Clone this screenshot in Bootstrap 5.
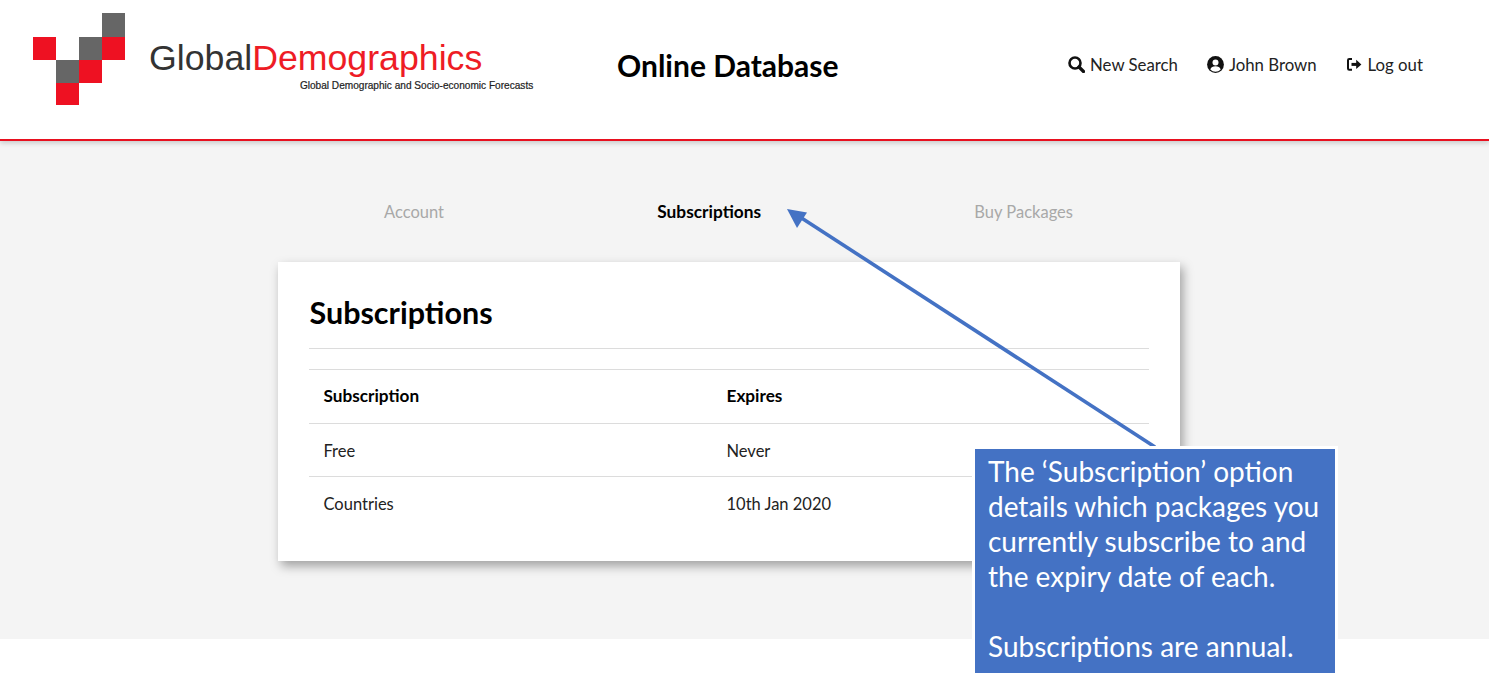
<!DOCTYPE html>
<html lang="en">
<head>
<meta charset="utf-8">
<title>Online Database</title>
<link href="https://cdn.jsdelivr.net/npm/bootstrap@5.3.0/dist/css/bootstrap.min.css" rel="stylesheet">
<style>
html,body{height:100%;}
body{background:#fff;font-family:"Lato","Liberation Sans",sans-serif;color:#111;position:relative;overflow:hidden;}
.top-bar{height:141px;border-bottom:2px solid #e8101f;box-shadow:0 2px 5px rgba(0,0,0,.18);padding:13px 66px 0 33px;background:#fff;position:relative;}
.brand-wrap{width:584px;height:92px;gap:24px;flex:none;}
.logo-mark{width:92px;height:92px;flex:none;}
.brand-name{font-family:"Liberation Sans",Arial,sans-serif;font-size:35.7px;line-height:38px;color:#333;margin-top:26px;white-space:nowrap;}
.brand-name span{color:#ee1c25;}
.brand-tag{font-family:"Liberation Sans",Arial,sans-serif;font-size:10.1px;line-height:11px;color:#222;text-align:right;white-space:nowrap;margin-right:-51px;margin-top:3px;-webkit-text-stroke:.2px #222;}
.site-title{font-size:30px;font-weight:700;color:#000;margin:34px auto 0 0;line-height:36px;white-space:nowrap;}
.top-links{gap:29px;margin-top:39px;}
.top-links a{color:#222;font-size:16.8px;line-height:25px;text-decoration:none;display:flex;align-items:center;gap:5px;}
.main-band{background:#f4f4f4;height:498px;padding:57px 32px 0 0;}
.tab-row{width:689px;margin:0 auto;height:28px;}
.tab-row a{font-size:16.5px;color:#a8a8a8;text-decoration:none;line-height:28px;padding:0;}
.tab-row a.active{color:#000;font-weight:700;font-size:17.3px;}
.sub-panel{width:902px;height:299px;margin:36px auto 0;background:#fff;box-shadow:3px 5px 10px rgba(0,0,0,.35);padding:31px 31px 0;border-radius:0;border:0;}
.sub-panel h2{font-size:30.5px;font-weight:700;line-height:38px;margin:0 0 17px 1px;color:#000;}
.rule-line{border-top:1px solid #dcdcdc;margin:0 0 20px;opacity:1;}
.sub-table{margin:0;font-size:16.5px;--bs-table-color:#222;}
.sub-table th,.sub-table td{padding:15px 15px 0;height:53px;line-height:24px;border-color:#dcdcdc;font-weight:400;vertical-align:top;}
.sub-table thead th{font-weight:700;font-size:17.2px;color:#000;border-top:1px solid #dcdcdc;height:54px;padding-top:14px;}
.sub-table tbody tr:last-child td{border-bottom:0;}
.col-first{width:403px;}
.arrow-layer{position:absolute;left:0;top:0;width:1489px;height:682px;pointer-events:none;}
.note-box{position:absolute;left:972px;top:446px;width:366px;height:227px;background:#4472c4;border:3px solid #fff;border-bottom:0;color:#fff;font-family:"Lato","Open Sans",sans-serif;font-size:28px;line-height:35px;padding:5px 10px 0 13px;}
.note-box p{margin:0;white-space:nowrap;}
.note-gap{height:35px;}
</style>
</head>
<body>
<header class="top-bar d-flex align-items-start">
  <div class="brand-wrap d-flex align-items-start">
    <svg class="logo-mark" viewBox="0 0 92 92" role="img" aria-label="Global Demographics logo">
      <rect x="0" y="24" width="23" height="23" fill="#ee1122"/>
      <rect x="23" y="47" width="23" height="23" fill="#666"/>
      <rect x="23" y="70" width="23" height="22" fill="#ee1122"/>
      <rect x="46" y="24" width="23" height="23" fill="#666"/>
      <rect x="46" y="47" width="23" height="23" fill="#ee1122"/>
      <rect x="69" y="0" width="23" height="24" fill="#666"/>
      <rect x="69" y="24" width="23" height="23" fill="#ee1122"/>
    </svg>
    <div>
      <div class="brand-name">Global<span>Demographics</span></div>
      <div class="brand-tag">Global Demographic and Socio-economic Forecasts</div>
    </div>
  </div>
  <h1 class="site-title">Online Database</h1>
  <nav class="top-links d-flex">
    <a href="#"><svg width="17" height="17" viewBox="0 0 17 17" fill="none" stroke="#111"><circle cx="7" cy="7" r="5.5" stroke-width="2.6"/><path d="M11 11l4.5 4.5" stroke-width="3.2" stroke-linecap="round"/></svg>New Search</a>
    <a href="#"><svg width="17" height="17" viewBox="0 0 17 17"><circle cx="8.5" cy="8.5" r="8.4" fill="#111"/><circle cx="8.5" cy="6.6" r="3" fill="#fff"/><path d="M3.3 13.4c.6-2.4 2.6-3.2 5.2-3.2s4.6.8 5.2 3.2a7 7 0 0 1-10.4 0z" fill="#fff"/></svg>John Brown</a>
    <a href="#"><svg width="17" height="17" viewBox="0 0 17 17" fill="none" stroke="#111" stroke-width="2"><path d="M6 3H3.2C2.3 3 2 3.5 2 4.2v8.4c0 .8.4 1.2 1.2 1.2H6"/><path d="M5.5 8.4h6" stroke-width="3"/><path d="M10.2 3.8l5.2 4.6-5.2 4.6z" fill="#111" stroke="none"/></svg>Log out</a>
  </nav>
</header>
<main class="main-band">
  <nav class="nav tab-row justify-content-between">
    <a class="nav-link" href="#">Account</a>
    <a class="nav-link active" href="#">Subscriptions</a>
    <a class="nav-link" href="#">Buy Packages</a>
  </nav>
  <section class="card sub-panel">
    <h2>Subscriptions</h2>
    <hr class="rule-line">
    <table class="table sub-table">
      <thead><tr><th class="col-first">Subscription</th><th>Expires</th></tr></thead>
      <tbody>
        <tr><td>Free</td><td>Never</td></tr>
        <tr><td>Countries</td><td>10th Jan 2020</td></tr>
      </tbody>
    </table>
  </section>
</main>
<svg class="arrow-layer" viewBox="0 0 1489 682" aria-hidden="true">
  <line x1="1155" y1="447" x2="800" y2="217" stroke="#4472c4" stroke-width="3.6"/>
  <polygon points="787,209 807,212.5 797,228" fill="#4472c4"/>
</svg>
<aside class="note-box">
  <p>The ‘Subscription’ option</p>
  <p>details which packages you</p>
  <p>currently subscribe to and</p>
  <p>the expiry date of each.</p>
  <div class="note-gap"></div>
  <p>Subscriptions are annual.</p>
</aside>
<script src="https://cdn.jsdelivr.net/npm/bootstrap@5.3.0/dist/js/bootstrap.bundle.min.js"></script>
</body>
</html>
